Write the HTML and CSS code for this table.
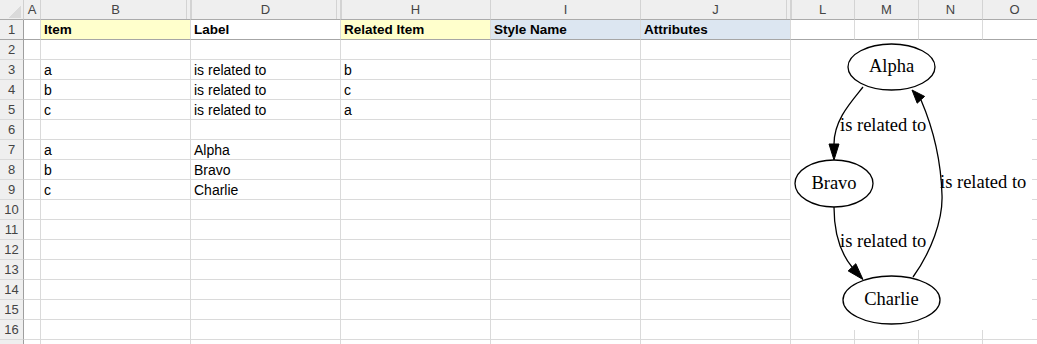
FILE: index.html
```
<!DOCTYPE html>
<html>
<head>
<meta charset="utf-8">
<link rel="stylesheet" href="styles.css">
</head>
<body>
<div class="wrap">
  <div class="sheet">
    <div class="corner"></div><div class="ch">A</div><div class="ch pre">B</div><div class="ch pre post">D</div><div class="ch post">H</div><div class="ch">I</div><div class="ch pre">J</div><div class="ch post">L</div><div class="ch">M</div><div class="ch">N</div><div class="ch">O</div>

    <div class="rh r1">1</div><div class="c r1"></div><div class="c r1 b yellow">Item</div><div class="c r1 b">Label</div><div class="c r1 b yellow">Related Item</div><div class="c r1 b blue">Style Name</div><div class="c r1 b blue">Attributes</div><div class="c r1"></div><div class="c r1"></div><div class="c r1"></div><div class="c r1"></div>

    <div class="rh">2</div><div class="c"></div><div class="c"></div><div class="c"></div><div class="c"></div><div class="c"></div><div class="c"></div><div class="c"></div><div class="c"></div><div class="c"></div><div class="c"></div>

    <div class="rh">3</div><div class="c"></div><div class="c">a</div><div class="c">is related to</div><div class="c">b</div><div class="c"></div><div class="c"></div><div class="c"></div><div class="c"></div><div class="c"></div><div class="c"></div>

    <div class="rh">4</div><div class="c"></div><div class="c">b</div><div class="c">is related to</div><div class="c">c</div><div class="c"></div><div class="c"></div><div class="c"></div><div class="c"></div><div class="c"></div><div class="c"></div>

    <div class="rh">5</div><div class="c"></div><div class="c">c</div><div class="c">is related to</div><div class="c">a</div><div class="c"></div><div class="c"></div><div class="c"></div><div class="c"></div><div class="c"></div><div class="c"></div>

    <div class="rh">6</div><div class="c"></div><div class="c"></div><div class="c"></div><div class="c"></div><div class="c"></div><div class="c"></div><div class="c"></div><div class="c"></div><div class="c"></div><div class="c"></div>

    <div class="rh">7</div><div class="c"></div><div class="c">a</div><div class="c">Alpha</div><div class="c"></div><div class="c"></div><div class="c"></div><div class="c"></div><div class="c"></div><div class="c"></div><div class="c"></div>

    <div class="rh">8</div><div class="c"></div><div class="c">b</div><div class="c">Bravo</div><div class="c"></div><div class="c"></div><div class="c"></div><div class="c"></div><div class="c"></div><div class="c"></div><div class="c"></div>

    <div class="rh">9</div><div class="c"></div><div class="c">c</div><div class="c">Charlie</div><div class="c"></div><div class="c"></div><div class="c"></div><div class="c"></div><div class="c"></div><div class="c"></div><div class="c"></div>

    <div class="rh">10</div><div class="c"></div><div class="c"></div><div class="c"></div><div class="c"></div><div class="c"></div><div class="c"></div><div class="c"></div><div class="c"></div><div class="c"></div><div class="c"></div>

    <div class="rh">11</div><div class="c"></div><div class="c"></div><div class="c"></div><div class="c"></div><div class="c"></div><div class="c"></div><div class="c"></div><div class="c"></div><div class="c"></div><div class="c"></div>

    <div class="rh">12</div><div class="c"></div><div class="c"></div><div class="c"></div><div class="c"></div><div class="c"></div><div class="c"></div><div class="c"></div><div class="c"></div><div class="c"></div><div class="c"></div>

    <div class="rh">13</div><div class="c"></div><div class="c"></div><div class="c"></div><div class="c"></div><div class="c"></div><div class="c"></div><div class="c"></div><div class="c"></div><div class="c"></div><div class="c"></div>

    <div class="rh">14</div><div class="c"></div><div class="c"></div><div class="c"></div><div class="c"></div><div class="c"></div><div class="c"></div><div class="c"></div><div class="c"></div><div class="c"></div><div class="c"></div>

    <div class="rh">15</div><div class="c"></div><div class="c"></div><div class="c"></div><div class="c"></div><div class="c"></div><div class="c"></div><div class="c"></div><div class="c"></div><div class="c"></div><div class="c"></div>

    <div class="rh">16</div><div class="c"></div><div class="c"></div><div class="c"></div><div class="c"></div><div class="c"></div><div class="c"></div><div class="c"></div><div class="c"></div><div class="c"></div><div class="c"></div>

    <div class="rh"></div><div class="c"></div><div class="c"></div><div class="c"></div><div class="c"></div><div class="c"></div><div class="c"></div><div class="c"></div><div class="c"></div><div class="c"></div><div class="c"></div>
  </div>

  <svg class="graph" width="241" height="290" viewBox="0 0 241 290" xmlns="http://www.w3.org/2000/svg">
    <g class="edge">
      <path d="M72,47 C60,62 43,80 43,104" />
      <polygon points="38,104 48,104 43,120" />
      <text x="49" y="91">is related to</text>
    </g>
    <g class="edge">
      <path d="M43,167 C43,190 47,210 61,227" />
      <polygon points="57.2,230.9 64.8,223.7 72,239.5" />
      <text x="49" y="207">is related to</text>
    </g>
    <g class="edge">
      <path d="M122,237 C140,212 152,180 151,155 C150,120 142,88 130,60" />
      <polygon points="133.6,56.4 126.2,63.2 121,50" />
      <text x="149" y="148">is related to</text>
    </g>
    <g class="node">
      <ellipse cx="100.5" cy="27" rx="43.5" ry="23" />
      <text x="100.5" y="32" text-anchor="middle">Alpha</text>
    </g>
    <g class="node">
      <ellipse cx="43" cy="143.5" rx="39" ry="23.5" />
      <text x="43" y="148.5" text-anchor="middle">Bravo</text>
    </g>
    <g class="node">
      <ellipse cx="100.5" cy="260" rx="48.5" ry="24" />
      <text x="100.5" y="265" text-anchor="middle">Charlie</text>
    </g>
  </svg>
</div>
</body>
</html>
```

FILE: styles.css
```
html, body {
  margin: 0;
  padding: 0;
  background: #ffffff;
}

body {
  width: 1037px;
  height: 344px;
  overflow: hidden;
  font-family: "Liberation Sans", Arial, sans-serif;
}

.wrap {
  position: relative;
  width: 1037px;
  height: 344px;
  overflow: hidden;
}

.sheet {
  display: grid;
  grid-template-columns: 24px 17px 150px 150px 150px 150px 150px 64px 64px 64px 64px;
  grid-auto-rows: 20px;
  width: max-content;
}

.sheet > div {
  box-sizing: border-box;
  white-space: nowrap;
  overflow: hidden;
}

.corner {
  background-color: #efefef;
  border-right: 1px solid #d0d0d0;
  border-bottom: 1px solid #ababab;
  background-image: linear-gradient(135deg, transparent 50%, #dadada 50%);
  background-repeat: no-repeat;
  background-size: 13px 12px;
  background-position: right 2px bottom 1px;
}

.ch {
  background: #efefef;
  color: #444444;
  font-size: 13px;
  line-height: 19px;
  text-align: center;
  border-right: 1px solid #d3d3d3;
  border-bottom: 1px solid #ababab;
}

.ch.pre {
  box-shadow: inset -3px 0 0 #efefef, inset -4px 0 0 #d3d3d3;
}

.ch.post {
  box-shadow: inset 1px 0 0 #d3d3d3;
}

.ch.pre.post {
  box-shadow: inset 1px 0 0 #d3d3d3, inset -3px 0 0 #efefef, inset -4px 0 0 #d3d3d3;
}

.rh {
  background: #efefef;
  color: #444444;
  font-size: 13px;
  line-height: 20px;
  text-align: center;
  border-right: 1px solid #9f9f9f;
  border-bottom: 1px solid #dadada;
}

.c {
  padding-left: 3px;
  font-size: 14px;
  line-height: 20px;
  color: #000000;
  border-right: 1px solid #dadada;
  border-bottom: 1px solid #dadada;
}

.r1 {
  border-bottom: 1px solid #a6a6a6;
}

.rh.r1 {
  border-bottom: 1px solid #a6a6a6;
}

.b {
  font-weight: bold;
  font-size: 13.5px;
}

.yellow {
  background: #ffffcc;
}

.blue {
  background: #dce6f1;
}

.graph {
  position: absolute;
  left: 791px;
  top: 40px;
  background: #ffffff;
  font-family: "Liberation Serif", "Times New Roman", serif;
  font-size: 18.5px;
}

.graph path {
  fill: none;
  stroke: #000000;
  stroke-width: 1.3;
}

.graph polygon {
  fill: #000000;
  stroke: #000000;
  stroke-width: 1;
}

.graph ellipse {
  fill: #ffffff;
  stroke: #000000;
  stroke-width: 1.3;
}

.graph text {
  fill: #000000;
}
```
